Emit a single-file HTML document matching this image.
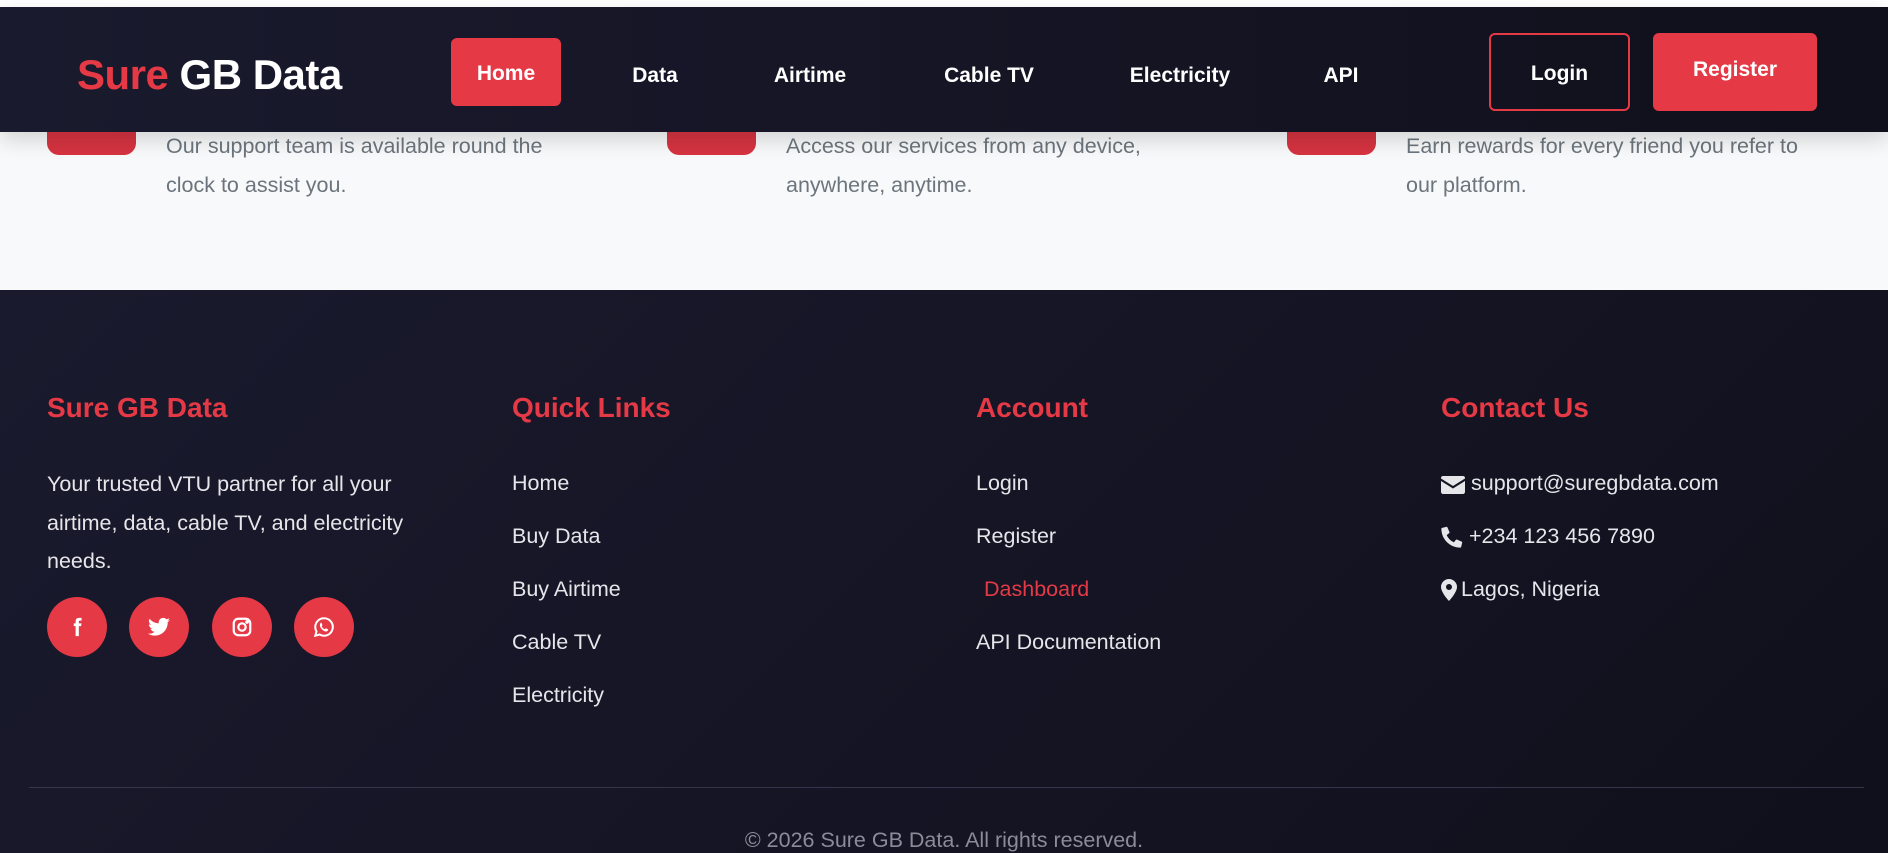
<!DOCTYPE html>
<html><head><meta charset="utf-8">
<style>
*{margin:0;padding:0;box-sizing:border-box}
body{width:1888px;height:853px;overflow:hidden;font-family:"Liberation Sans",sans-serif;background:#f8f9fa;position:relative}
.abs{position:absolute}
.top{left:0;top:0;width:1888px;height:7px;background:#fff}
.nav{left:0;top:7px;width:1888px;height:125px;background:linear-gradient(90deg,#1a1a2e,#10101c);box-shadow:0 8px 20px rgba(0,0,0,.15);z-index:5}
.logo{left:77px;font-size:42px;font-weight:bold;color:#fff;letter-spacing:-0.5px}
.logo span{color:#e63946}
.ni{font-size:21px;font-weight:bold;color:#fff;transform:translateX(-50%)}
.home{left:451px;top:31px;width:110px;height:68px;background:#e63946;border-radius:6px;color:#fff;font-size:21px;font-weight:bold;display:flex;align-items:center;justify-content:center;padding-top:4px}
.login{left:1489px;top:26px;width:141px;height:78px;border:2px solid #e63946;border-radius:6px;color:#fff;font-size:21px;font-weight:bold;display:flex;align-items:center;justify-content:center;padding-top:3px}
.reg{left:1653px;top:26px;width:164px;height:78px;background:#e63946;border-radius:6px;color:#fff;font-size:21px;font-weight:bold;display:flex;align-items:center;justify-content:center;padding-bottom:4px}
.box{top:110px;width:89px;height:45px;background:#d63341;border-radius:0 0 12px 12px}
.ft{top:127px;font-size:21.5px;line-height:38.5px;color:#6c757d;width:420px}
.footer{left:0;top:290px;width:1888px;height:563px;background:linear-gradient(135deg,#1a1a2e,#10101c)}
.h{top:392px;font-size:28px;font-weight:bold;color:#e63946}
.p{color:#e6e6ea;font-size:21.5px}
.lk{font-size:21.5px;color:#e6e6ea}
.soc{top:597px;width:60px;height:60px;border-radius:50%;background:#e63946;display:flex;align-items:center;justify-content:center}
.div{left:29px;top:787px;width:1835px;height:1px;background:#34354a}
.copy{left:0;width:1888px;top:828px;text-align:center;font-size:21.5px;color:#8b8b99}
.ci{display:flex;align-items:center;gap:6px}
</style></head><body>
<div class="abs top"></div>

<div class="abs box" style="left:47px"></div>
<div class="abs box" style="left:667px"></div>
<div class="abs box" style="left:1287px"></div>
<div class="abs ft" style="left:166px">Our support team is available round the clock to assist you.</div>
<div class="abs ft" style="left:786px">Access our services from any device, anywhere, anytime.</div>
<div class="abs ft" style="left:1406px">Earn rewards for every friend you refer to our platform.</div>

<div class="abs nav">
<div class="abs logo" style="top:44px"><span>Sure</span> GB Data</div>
<div class="abs home">Home</div>
<div class="abs ni" style="left:655px;top:57px">Data</div>
<div class="abs ni" style="left:810px;top:57px">Airtime</div>
<div class="abs ni" style="left:989px;top:57px">Cable TV</div>
<div class="abs ni" style="left:1180px;top:57px">Electricity</div>
<div class="abs ni" style="left:1341px;top:57px">API</div>
<div class="abs login">Login</div>
<div class="abs reg">Register</div>
</div>

<div class="abs footer"></div>
<div class="abs h" style="left:47px">Sure GB Data</div>
<div class="abs h" style="left:512px">Quick Links</div>
<div class="abs h" style="left:976px">Account</div>
<div class="abs h" style="left:1441px">Contact Us</div>

<div class="abs p" style="left:47px;top:465px;width:420px;line-height:38.5px">Your trusted VTU partner for all your airtime, data, cable TV, and electricity needs.</div>

<div class="abs soc" style="left:47px"><svg width="22" height="22" viewBox="0 0 24 24"><path fill="#fff" d="M14 8V6.2c0-.8.2-1.2 1.4-1.2H17V2h-2.6C11.3 2 10.5 3.6 10.5 6v2H8.5v3h2v11h3.5V11h2.5l.4-3z"/></svg></div>
<div class="abs soc" style="left:129px"><svg width="24" height="24" viewBox="0 0 24 24"><path fill="#fff" d="M23 5c-.8.4-1.7.6-2.6.7.9-.6 1.6-1.4 2-2.5-.9.5-1.9.9-2.9 1.1A4.5 4.5 0 0 0 11.8 8.4 12.8 12.8 0 0 1 2.5 3.7a4.5 4.5 0 0 0 1.4 6c-.7 0-1.4-.2-2-.6 0 2.2 1.5 4 3.6 4.4-.7.2-1.4.2-2 .1.6 1.8 2.2 3.1 4.2 3.1A9 9 0 0 1 1 18.6 12.8 12.8 0 0 0 7.9 20.6c8.3 0 12.8-6.9 12.8-12.8v-.6c.9-.6 1.7-1.4 2.3-2.2z"/></svg></div>
<div class="abs soc" style="left:212px"><svg width="22" height="22" viewBox="0 0 24 24" fill="none" stroke="#fff" stroke-width="2.4"><rect x="3" y="3" width="18" height="18" rx="5"/><circle cx="12" cy="12" r="4"/><circle cx="17.5" cy="6.5" r=".8" fill="#fff"/></svg></div>
<div class="abs soc" style="left:294px"><svg width="22" height="22" viewBox="0 0 24 24"><path fill="none" stroke="#fff" stroke-width="2.2" d="M12 2.5a9.5 9.5 0 0 0-8.2 14.3L2.5 21.5l4.8-1.3A9.5 9.5 0 1 0 12 2.5z"/><path fill="#fff" d="M8.6 7.2c.3 0 .6 0 .8.6l.8 1.9c.1.3 0 .6-.2.8l-.6.7c.8 1.5 2 2.6 3.4 3.3l.7-.8c.2-.2.5-.3.8-.2l1.9.9c.3.2.4.4.3.8-.2 1-1.2 1.8-2.3 1.8-2.8-.3-6.6-3.9-6.7-6.8 0-1.2.6-2.6 1.1-3z"/></svg></div>

<div class="abs lk" style="left:512px;top:471px">Home</div>
<div class="abs lk" style="left:512px;top:524px">Buy Data</div>
<div class="abs lk" style="left:512px;top:577px">Buy Airtime</div>
<div class="abs lk" style="left:512px;top:630px">Cable TV</div>
<div class="abs lk" style="left:512px;top:683px">Electricity</div>

<div class="abs lk" style="left:976px;top:471px">Login</div>
<div class="abs lk" style="left:976px;top:524px">Register</div>
<div class="abs lk" style="left:984px;top:577px;color:#e63946">Dashboard</div>
<div class="abs lk" style="left:976px;top:630px">API Documentation</div>

<div class="abs lk ci" style="left:1441px;top:471px"><svg width="24" height="20" viewBox="0 0 24 20"><path fill="#e6e6ea" d="M2 2h20c1 0 2 .8 2 2v.5L12 12 0 4.5V4c0-1.2 1-2 2-2zM0 7l12 7.5L24 7v11c0 1-1 2-2 2H2c-1 0-2-1-2-2z"/></svg>support@suregbdata.com</div>
<div class="abs lk ci" style="left:1441px;top:524px"><svg width="22" height="22" viewBox="0 0 24 24"><path fill="#e6e6ea" d="M22.5 17l-5-2.2c-.5-.2-1 0-1.3.3l-2.2 2.7C10.5 16.2 7.8 13.5 6.2 10l2.7-2.2c.4-.3.5-.8.3-1.3L7 1.5C6.8 1 6.3.8 5.8.9L1.2 2C.7 2.1.4 2.5.4 3 .4 14.3 9.7 23.6 21 23.6c.5 0 .9-.3 1-.8l1.1-4.6c.1-.5-.1-1-.6-1.2z"/></svg>+234 123 456 7890</div>
<div class="abs lk ci" style="left:1441px;top:577px;gap:4px"><svg width="16" height="22" viewBox="0 0 16 22"><path fill="#e6e6ea" d="M8 0a8 8 0 0 0-8 8c0 5.5 8 14 8 14s8-8.5 8-14a8 8 0 0 0-8-8zm0 11a3 3 0 1 1 0-6 3 3 0 0 1 0 6z"/></svg>Lagos, Nigeria</div>

<div class="abs div"></div>
<div class="abs copy">© 2026 Sure GB Data. All rights reserved.</div>
</body></html>
